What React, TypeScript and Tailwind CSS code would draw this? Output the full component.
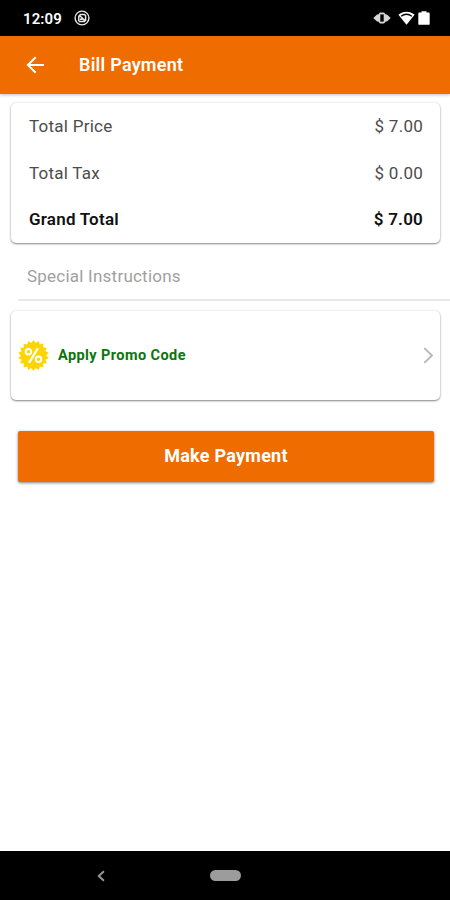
const BADGE_POINTS = Array.from({ length: 36 }, (_, i) => {
  const r = i % 2 === 0 ? 16 : 13;
  const a = (i * Math.PI) / 18;
  return `${(16 + r * Math.sin(a)).toFixed(2)},${(16 - r * Math.cos(a)).toFixed(2)}`;
}).join(" ");

function StatusBar() {
  return (
    <div className="flex h-9 shrink-0 items-center bg-black pl-[23px] pr-[20px] text-white">
      <span className="pt-px text-[15px] leading-5 font-semibold tracking-[0.1px]">12:09</span>
      <svg className="ml-[12px]" width="16" height="16" viewBox="0 0 16 16" fill="none" stroke="#e8e8e8">
        <circle cx="8" cy="8" r="6.9" strokeWidth="1.4" />
        <path d="M4.8 11.2V6.2L6.4 4.6h4.2l1 1.2v4.4l-1.2 1.2H4.8M5.3 5.2l5.6 5.4M6 9.2h2.5" strokeWidth="1.5" />
      </svg>
      <svg className="ml-auto" width="18" height="14" viewBox="0 0 18 14">
        <path d="M0.3 7 4 3.6h1.2L7 1.4h4l1.8 2.2H14L17.7 7 14 10.4h-1.2L11 12.6H7L5.2 10.4H4z" fill="#d6d6d6" />
        <rect x="7.3" y="3.4" width="3.4" height="7.2" fill="#000" />
      </svg>
      <svg className="ml-[7px]" width="17" height="14" viewBox="0 0 17 14">
        <path d="M0.4 3.7C5 -0.3 12 -0.3 16.6 3.7L8.5 13.7z" fill="#fff" />
        <path d="M3.1 5.3C6.3 2.9 10.7 2.9 13.9 5.3" fill="none" stroke="#000" strokeWidth="1.3" />
      </svg>
      <svg className="ml-[3px]" width="12" height="14" viewBox="0 0 12 14">
        <path d="M1.2 1.5H3.5V0.2h5v1.3h2.3q.9 0 .9.9v10.5q0 .9-.9.9H1.2q-.9 0-.9-.9V2.4q0-.9.9-.9z" fill="#fff" />
      </svg>
    </div>
  );
}

function AmountRow({ label, amount, strong = false }: { label: string; amount: string; strong?: boolean }) {
  return (
    <div
      className={
        strong
          ? "flex h-[46px] items-center justify-between text-[17px] font-semibold tracking-[0.22px] text-[#111]"
          : "flex h-[46px] items-center justify-between text-[17px] tracking-[0.25px] text-[#4c4c4c]"
      }
    >
      <span>{label}</span>
      <span>{amount}</span>
    </div>
  );
}

export default function App() {
  return (
    <div className="flex h-[900px] w-[450px] flex-col overflow-hidden bg-white font-[Roboto,sans-serif]">
      <StatusBar />
      <header className="flex h-[58px] shrink-0 items-center bg-[#ef6c00] pl-[26px] text-white shadow-[0_1px_3px_rgba(40,40,70,0.3)]">
        <svg width="19" height="18" viewBox="0 0 19 18" fill="none" stroke="#fff" strokeWidth="2">
          <path d="M18 9H2M9.7 1.2 1.9 9l7.8 7.8" />
        </svg>
        <h1 className="ml-[34px] text-[18px] leading-6 font-semibold tracking-[0.25px]">Bill Payment</h1>
      </header>

      <main className="flex flex-1 flex-col">
        <section className="ml-[11px] mr-[10px] mt-[9px] h-[140px] rounded-[5px] bg-white pl-[18px] pr-[17px] pt-px shadow-[0_1px_2px_rgba(0,0,0,0.45),0_0_3px_rgba(0,0,0,0.1)]">
          <AmountRow label="Total Price" amount="$ 7.00" />
          <div className="pt-px">
            <AmountRow label="Total Tax" amount="$ 0.00" />
            <AmountRow label="Grand Total" amount="$ 7.00" strong />
          </div>
        </section>

        <div className="ml-[18px] flex h-[58px] items-center border-b-2 border-[#e9e9e9] pl-[9px] pt-[11px] text-[17px] tracking-[0.23px] text-[#a0a0a0]">
          Special Instructions
        </div>

        <section className="ml-[11px] mr-[10px] mt-[10px] flex h-[89px] items-center rounded-[5px] bg-white pl-[7px] pr-[6px] shadow-[0_1px_2px_rgba(0,0,0,0.45),0_0_3px_rgba(0,0,0,0.1)]">
          <svg width="31" height="31" viewBox="0 0 32 32">
            <polygon points={BADGE_POINTS} fill="#fdd504" />
            <g fill="none" stroke="#fff" strokeWidth="2.1">
              <circle cx="10.8" cy="12.2" r="2.8" />
              <circle cx="21.2" cy="19.8" r="2.8" />
              <path d="M20.6 8.5 11.4 23.5" strokeWidth="2.4" />
            </g>
          </svg>
          <span className="ml-[9px] pt-px text-[14.5px] font-bold tracking-[0.42px] text-[#0c750c]">Apply Promo Code</span>
          <svg className="ml-auto" width="11" height="17" viewBox="0 0 11 17" fill="none" stroke="#b5b5b5" strokeWidth="1.8">
            <path d="m1.3 1.2 7.7 7.3-7.7 7.3" />
          </svg>
        </section>

        <button className="ml-[18px] mr-[16px] mt-[31px] h-[51px] rounded-[2px] bg-[#ef6c00] pb-[2px] text-[18px] font-bold tracking-[0.25px] text-white shadow-[0_1px_3px_rgba(0,0,0,0.5)]">
          Make Payment
        </button>
      </main>

      <nav className="flex h-[49px] shrink-0 items-center bg-black pl-[97px]">
        <svg width="8" height="12" viewBox="0 0 8 12" fill="none" stroke="#999" strokeWidth="1.9">
          <path d="M6.9 1.2 1.8 6l5.1 4.8" />
        </svg>
        <span className="ml-[105px] h-[11px] w-[31px] rounded-full bg-[#9c9c9c]" />
      </nav>
    </div>
  );
}
